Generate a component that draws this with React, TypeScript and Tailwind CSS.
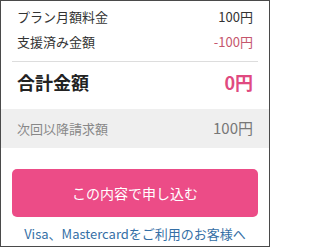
export default function App() {
  return (
    <div className="w-[270px] h-[247px] border border-[#4a4a4a] bg-white text-[#333] font-['Noto_Sans_CJK_JP',sans-serif] flex flex-col">
      {/* 明細 */}
      <div className="pt-[3px]">
        <div className="h-[25px] px-4 flex items-center justify-between text-[13px]">
          <span>プラン月額料金</span>
          <span>100円</span>
        </div>
        <div className="h-[25px] px-4 flex items-center justify-between text-[13px]">
          <span>支援済み金額</span>
          <span className="text-[#c5566c]">-100円</span>
        </div>
      </div>
      <div className="mx-[11px] mt-[7px] border-t border-[#dddddd]" />
      <div className="h-[40px] px-4 flex items-center justify-between">
        <span className="text-[18px] font-bold text-[#222]">合計金額</span>
        <span className="text-[18px] font-bold text-[#e04a80]">0円</span>
      </div>

      {/* 次回以降 */}
      <div className="mt-[7px] h-[39px] bg-[#efefef] px-4 flex items-center justify-between">
        <span className="text-[13px] text-[#888]">次回以降請求額</span>
        <span className="text-[15px] text-[#777]">100円</span>
      </div>

      <button className="mx-[11px] mt-[21px] h-[48px] rounded-[5px] bg-[#ec4c87] text-white text-[14px] flex items-center justify-center">
        この内容で申し込む
      </button>
      <div className="mt-[8px] text-center text-[13px] leading-[18px] text-[#356fa6]">
        Visa、Mastercardをご利用のお客様へ
      </div>
    </div>
  )
}
